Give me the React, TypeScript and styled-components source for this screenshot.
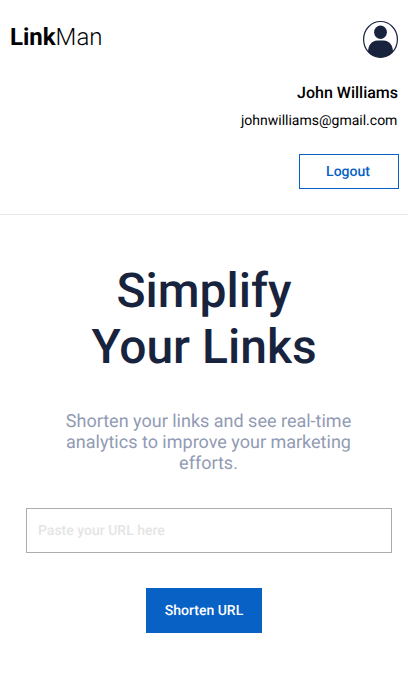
import React from "react";
import styled, { createGlobalStyle } from "styled-components";

const GlobalStyle = createGlobalStyle`
  * { box-sizing: border-box; }
  body {
    margin: 0;
    background: #fff;
    font-family: Roboto, sans-serif;
    text-rendering: geometricPrecision;
  }
  button, input { text-rendering: inherit; }
`;
const Page = styled.div`
  height: 692px;
  background: #fff;
`;
const Header = styled.header`
  height: 215px;
  padding: 20px 9px 0 10px;
  border-bottom: 1px solid #e8e8e8;
  display: flex;
  justify-content: space-between;
`;
const Logo = styled.div`
  margin-top: 3px;
  font-size: 24px;
  line-height: 28px;
  font-weight: 300;
  color: #000;
  strong { font-weight: 700; }
`;
const Account = styled.div`
  display: flex;
  flex-direction: column;
  align-items: flex-end;
`;
const Avatar = styled.svg`
  width: 37px;
  height: 38px;
  display: block;
`;
const Name = styled.div`
  margin: 25px 1px 0 0;
  font-size: 16px;
  line-height: 19px;
  font-weight: 500;
  color: #000;
`;
const Email = styled.div`
  margin: 11px 1.6px 0 0;
  font-size: 14px;
  line-height: 16px;
  color: #000;
`;
const LogoutButton = styled.button`
  margin-top: 25px;
  width: 100px;
  height: 35px;
  padding: 1px 2px 0 0;
  border: 1px solid #0861c5;
  background: #fff;
  color: #0861c5;
  font: 500 14px/16px Roboto, sans-serif;
`;
const Hero = styled.main`
  display: flex;
  flex-direction: column;
  align-items: center;
`;
const Title = styled.h1`
  margin: 48px 0 0;
  font-size: 48px;
  line-height: 56px;
  font-weight: 500;
  color: #18233d;
  text-align: center;
`;
const Lead = styled.p`
  margin: 36px 0 0 9px;
  width: 300px;
  font-size: 18px;
  line-height: 21px;
  color: #919bb4;
  text-align: center;
`;
const UrlInput = styled.input`
  margin: 34px 0 0 10px;
  width: 366px;
  height: 45px;
  padding: 1px 11px 0;
  border: 1px solid #acacac;
  border-radius: 0;
  background: #fff;
  font: 500 14px/16px Roboto, sans-serif;
  &::placeholder { color: #e5e5e5; }
`;
const ShortenButton = styled.button`
  margin-top: 35px;
  width: 116px;
  height: 45px;
  padding: 1px 0 0;
  border: 0;
  background: #0861c5;
  color: #fff;
  font: 500 14px/16px Roboto, sans-serif;
`;

export default function App() {
  return (
    <Page>
      <GlobalStyle />
      <Header>
        <Logo><strong>Link</strong>Man</Logo>
        <Account>
          <Avatar viewBox="0 0 37 38">
            <ellipse cx="18.5" cy="19.4" rx="16.9" ry="17.9" fill="#fff" stroke="#18233d" strokeWidth="1.2" />
            <ellipse cx="18.5" cy="12.3" rx="6.4" ry="6.7" fill="#18233d" />
            <path d="M6 32C6.1 25.6 9.3 20.4 15.5 20.4H21.5C27.7 20.4 30.9 25.6 31 32C27.5 35.7 23.2 37.3 18.5 37.3S9.5 35.7 6 32Z" fill="#18233d" />
          </Avatar>
          <Name>John Williams</Name>
          <Email>johnwilliams@gmail.com</Email>
          <LogoutButton>Logout</LogoutButton>
        </Account>
      </Header>
      <Hero>
        <Title>Simplify<br />Your Links</Title>
        <Lead>Shorten your links and see real-time analytics to improve your marketing efforts.</Lead>
        <UrlInput placeholder="Paste your URL here" />
        <ShortenButton>Shorten URL</ShortenButton>
      </Hero>
    </Page>
  );
}
